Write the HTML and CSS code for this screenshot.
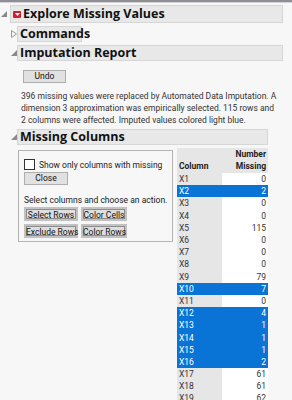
FILE: index.html
```html
<!DOCTYPE html>
<html>
<head>
<meta charset="utf-8">
<link rel="stylesheet" href="styles.css">
</head>
<body>
<div class="topline"></div>
<div class="outline">
  <div class="row main-row">
    <svg class="tri" width="6" height="6" viewBox="0 0 6 6"><polygon points="6,0 6,6 0,6" fill="#8a8a8a"/></svg>
    <div class="hdr main"><span class="redbtn"><svg width="7" height="6" viewBox="0 0 7 6"><polygon points="1,2 6,2 3.5,5" fill="#fff"/></svg></span>Explore Missing Values</div>
  </div>
  <div class="sub">
    <div class="row">
      <svg class="tri" width="6" height="8" viewBox="0 0 6 8"><polygon points="0.5,0.5 5.5,4 0.5,7.5" fill="none" stroke="#9a9a9a" stroke-width="1"/></svg>
      <div class="hdr short">Commands</div>
    </div>
    <div class="row">
      <svg class="tri" width="6" height="6" viewBox="0 0 6 6"><polygon points="6,0 6,6 0,6" fill="#8a8a8a"/></svg>
      <div class="hdr wide">Imputation Report</div>
    </div>
    <div class="imp">
      <div class="btn undo">Undo</div>
      <p class="note">396 missing values were replaced by Automated Data Imputation. A<br>dimension 3 approximation was empirically selected. 115 rows and<br>2 columns were affected. Imputed values colored light blue.</p>
    </div>
    <div class="row">
      <svg class="tri" width="6" height="6" viewBox="0 0 6 6"><polygon points="6,0 6,6 0,6" fill="#8a8a8a"/></svg>
      <div class="hdr mid">Missing Columns</div>
    </div>
    <div class="mc">
      <div class="panel">
        <label class="chk"><span class="box"></span>Show only columns with missing</label>
        <div class="btn close">Close</div>
        <div class="hint">Select columns and choose an action.</div>
        <div class="grid">
          <div class="btn act">Select Rows</div>
          <div class="btn act">Color Cells</div>
          <div class="btn act">Exclude Rows</div>
          <div class="btn act">Color Rows</div>
        </div>
      </div>
      <table class="tbl">
        <thead>
          <tr><th class="c1">Column</th><th class="c2">Number<br>Missing</th></tr>
        </thead>
        <tbody>
          <tr><td class="c1">X1</td><td class="c2">0</td></tr>
          <tr class="sel"><td class="c1">X2</td><td class="c2">2</td></tr>
          <tr><td class="c1">X3</td><td class="c2">0</td></tr>
          <tr><td class="c1">X4</td><td class="c2">0</td></tr>
          <tr><td class="c1">X5</td><td class="c2">115</td></tr>
          <tr><td class="c1">X6</td><td class="c2">0</td></tr>
          <tr><td class="c1">X7</td><td class="c2">0</td></tr>
          <tr><td class="c1">X8</td><td class="c2">0</td></tr>
          <tr><td class="c1">X9</td><td class="c2">79</td></tr>
          <tr class="sel"><td class="c1">X10</td><td class="c2">7</td></tr>
          <tr><td class="c1">X11</td><td class="c2">0</td></tr>
          <tr class="sel"><td class="c1">X12</td><td class="c2">4</td></tr>
          <tr class="sel"><td class="c1">X13</td><td class="c2">1</td></tr>
          <tr class="sel"><td class="c1">X14</td><td class="c2">1</td></tr>
          <tr class="sel"><td class="c1">X15</td><td class="c2">1</td></tr>
          <tr class="sel"><td class="c1">X16</td><td class="c2">2</td></tr>
          <tr><td class="c1">X17</td><td class="c2">61</td></tr>
          <tr><td class="c1">X18</td><td class="c2">61</td></tr>
          <tr><td class="c1">X19</td><td class="c2">62</td></tr>
        </tbody>
      </table>
    </div>
  </div>
</div>
</body>
</html>
```

FILE: styles.css
```css
html, body {
  margin: 0;
  padding: 0;
  background: #f7f7f7;
  overflow: hidden;
}
body {
  width: 292px;
  height: 400px;
  font-family: Roboto, "Open Sans", sans-serif;
  font-size: 8.5px;
  color: #222;
}
.topline {
  height: 2px;
  background: #8e8e96;
  border-bottom: 1px solid #d4d4d4;
}
.outline {
  padding-top: 2px;
}
.row {
  display: flex;
  align-items: center;
}
.main-row .tri {
  margin-left: 1px;
  margin-right: 3px;
}
.sub {
  padding-left: 11px;
  margin-top: 3px;
  display: flex;
  flex-direction: column;
}
.sub .row {
  margin-bottom: 3px;
}
.sub .tri {
  width: 6px;
}
.hdr {
  box-sizing: border-box;
  height: 16px;
  background: #e8e8e8;
  border: 1px solid #d6d6d6;
  font-family: "Open Sans", sans-serif;
  font-weight: 700;
  font-size: 12.5px;
  line-height: 14px;
  padding-left: 2px;
  color: #111;
  display: flex;
  align-items: center;
  white-space: nowrap;
}
.hdr.main {
  width: 273px;
  height: 18px;
}
.hdr.short { width: 65px; }
.hdr.wide { width: 266px; }
.hdr.mid { width: 251px; }
.redbtn {
  display: inline-flex;
  align-items: center;
  justify-content: center;
  width: 8px;
  height: 7px;
  background: #d2202a;
  border-radius: 1px;
  margin-right: 2px;
}
.btn {
  box-sizing: border-box;
  background: #e1e1e1;
  border: 1px solid #adadad;
  line-height: 11px;
  text-align: center;
  color: #111;
  white-space: nowrap;
}
.imp {
  padding-left: 10px;
  padding-top: 6px;
  padding-bottom: 3px;
}
.undo {
  width: 43px;
  height: 13px;
  margin-left: 2px;
}
.note {
  margin: 7px 0 0 0;
  line-height: 12px;
  color: #333;
  white-space: nowrap;
}
.mc {
  display: flex;
  align-items: flex-start;
  padding-left: 7px;
}
.panel {
  box-sizing: border-box;
  width: 155px;
  height: 92px;
  margin-top: 2px;
  border: 1px solid #b4b4b4;
  padding: 8px 0 0 5px;
  display: flex;
  flex-direction: column;
  align-items: flex-start;
}
.chk {
  display: flex;
  align-items: center;
  height: 11px;
  color: #222;
  white-space: nowrap;
}
.box {
  width: 9px;
  height: 9px;
  border: 1px solid #333;
  background: #fff;
  margin-right: 4px;
}
.close {
  width: 44px;
  height: 13px;
  margin-top: 2px;
}
.hint {
  margin-top: 9px;
  line-height: 12px;
  white-space: nowrap;
}
.grid {
  display: grid;
  grid-template-columns: 54px 46px;
  gap: 3px;
  margin-top: 1px;
}
.act {
  height: 14px;
  line-height: 12px;
  border: 2px solid #c2c2c2;
  box-shadow: inset 0 0 0 1px #8c8c8c;
  background: #dedede;
}
.tbl {
  border-collapse: collapse;
  margin-left: 4px;
}
.tbl th {
  background: #e6e6e6;
  font-weight: 700;
  height: 24px;
  padding: 0 2px 1px 2px;
  line-height: 11.5px;
  vertical-align: bottom;
  color: #222;
}
.tbl th.c1 { text-align: left; width: 41px; }
.tbl th.c2 { text-align: right; width: 42px; }
.tbl td {
  height: 12.2px;
  padding: 0 2px;
  line-height: 12px;
  color: #333;
}
.tbl td.c1 { background: #e6e6e6; text-align: left; }
.tbl td.c2 { background: #fff; text-align: right; }
.tbl tr.sel td {
  background: #0a74d6;
  color: #fff;
}
```
